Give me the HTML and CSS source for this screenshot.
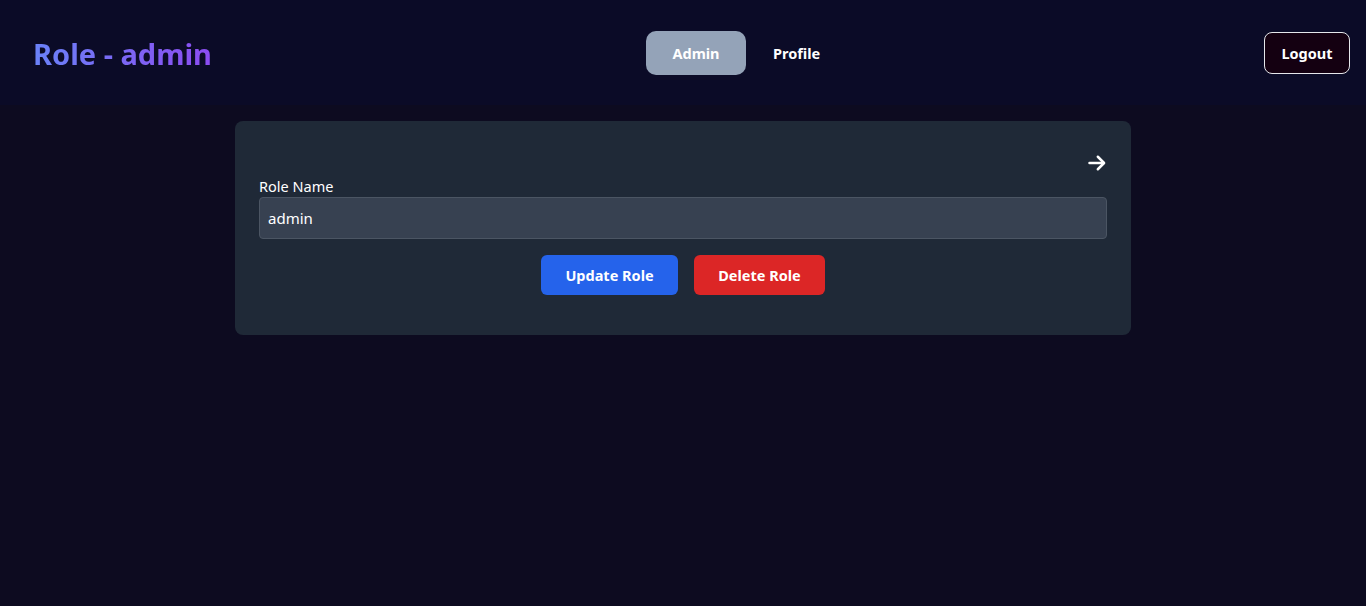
FILE: index.html
```html
<!DOCTYPE html>
<html lang="en">
<head>
<meta charset="utf-8">
<title>Role - admin</title>
<link rel="stylesheet" href="styles.css">
</head>
<body>
<header class="topbar">
  <h1 class="title">Role - admin</h1>
  <nav class="nav">
    <a class="nav-link active" href="#">Admin</a>
    <a class="nav-link" href="#">Profile</a>
  </nav>
  <button class="logout">Logout</button>
</header>
<main class="main">
  <section class="card">
    <div class="card-top">
      <svg class="arrow" width="20" height="20" viewBox="0 0 24 24" fill="none" stroke="#ffffff" stroke-width="3" stroke-linecap="round" stroke-linejoin="round"><path d="M3 12h17"/><path d="M13 4.5l7.5 7.5-7.5 7.5"/></svg>
    </div>
    <label class="label" for="role">Role Name</label>
    <input class="input" id="role" type="text" value="admin">
    <div class="actions">
      <button class="btn btn-blue">Update Role</button>
      <button class="btn btn-red">Delete Role</button>
    </div>
  </section>
</main>
</body>
</html>
```
FILE: styles.css
```css
* { box-sizing: border-box; }
html, body { margin: 0; padding: 0; }
body {
  background: #0d0b20;
  font-family: "Noto Sans", "Open Sans", sans-serif;
  color: #ffffff;
  min-height: 606px;
}
.topbar {
  background: #0b0b27;
  height: 105px;
  display: flex;
  align-items: center;
  justify-content: space-between;
  padding: 0 16px 0 33px;
  position: relative;
}
.title {
  margin: 2px 0 0;
  font-size: 29px;
  font-weight: 700;
  background: linear-gradient(90deg, #6a82f8, #8c4cf1);
  -webkit-background-clip: text;
  background-clip: text;
  color: transparent;
  width: fit-content;
}
.nav {
  position: absolute;
  left: 646px;
  top: 31px;
  display: flex;
  align-items: center;
  gap: 8px;
}
.nav-link {
  display: flex;
  align-items: center;
  justify-content: center;
  height: 44px;
  padding: 0 19px;
  border-radius: 10px;
  color: #ffffff;
  text-decoration: none;
  font-size: 14.5px;
  font-weight: 700;
}
.nav-link.active {
  background: #94a3b8;
  width: 100px;
}
.logout {
  height: 42px;
  width: 86px;
  border: 1px solid #e5e7eb;
  border-radius: 8px;
  background: #140011;
  color: #ffffff;
  font-family: inherit;
  font-size: 14.5px;
  font-weight: 700;
  margin-top: 1px;
}
.main {
  display: flex;
  justify-content: center;
  padding-top: 16px;
}
.card {
  width: 896px;
  background: #1f2937;
  border-radius: 8px;
  padding: 24px 24px 40px;
  display: flex;
  flex-direction: column;
}
.card-top {
  display: flex;
  justify-content: flex-end;
  height: 30px;
  padding-top: 8px;
}
.arrow { display: block; }
.label {
  font-size: 14.5px;
  line-height: 22px;
  color: #ffffff;
}
.input {
  height: 42px;
  width: 100%;
  background: #374151;
  border: 1px solid #4b5563;
  border-radius: 4px;
  color: #ffffff;
  font-family: inherit;
  font-size: 15px;
  padding: 0 8px;
  outline: none;
}
.actions {
  margin-top: 16px;
  display: flex;
  justify-content: center;
  gap: 16px;
}
.btn {
  height: 40px;
  border: none;
  border-radius: 6px;
  color: #ffffff;
  font-family: inherit;
  font-size: 14.5px;
  font-weight: 700;
  padding: 0 24px;
}
.btn-blue { background: #2563eb; width: 137px; }
.btn-red { background: #dc2626; width: 131px; }
```
